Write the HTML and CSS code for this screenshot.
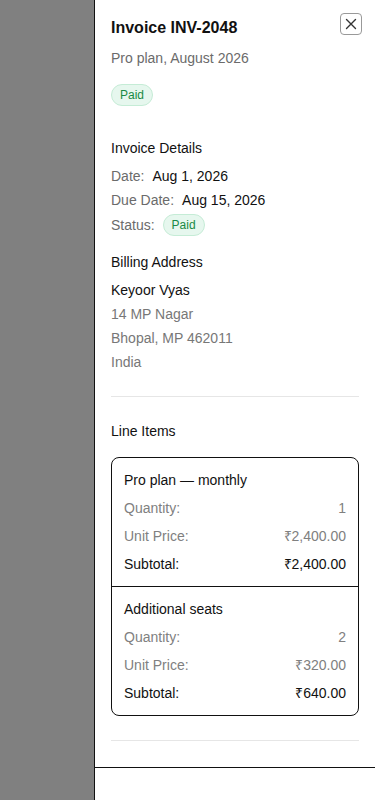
FILE: index.html
```html
<!DOCTYPE html>
<html lang="en">
<head>
<meta charset="utf-8">
<link rel="stylesheet" href="styles.css">
</head>
<body>
<div class="screen">
  <div class="overlay"></div>
  <aside class="panel">
    <div class="panel-body">
      <header class="head">
        <div class="head-text">
          <h1 class="title">Invoice INV-2048</h1>
          <p class="subtitle">Pro plan, August 2026</p>
          <span class="badge">Paid</span>
        </div>
        <button class="close" aria-label="Close">
          <svg width="12" height="12" viewBox="0 0 12 12"><path d="M1.5 1.5 L10.5 10.5 M10.5 1.5 L1.5 10.5" stroke="#333" stroke-width="1.4" stroke-linecap="round" fill="none"/></svg>
        </button>
      </header>

      <section class="section">
        <h2 class="sec-title">Invoice Details</h2>
        <div class="rows">
          <div class="kv"><span class="k">Date:</span><span class="v">Aug 1, 2026</span></div>
          <div class="kv"><span class="k">Due Date:</span><span class="v">Aug 15, 2026</span></div>
          <div class="kv"><span class="k">Status:</span><span class="badge">Paid</span></div>
        </div>
      </section>

      <section class="section addr">
        <h2 class="sec-title">Billing Address</h2>
        <div class="rows">
          <div class="name">Keyoor Vyas</div>
          <div class="muted">14 MP Nagar</div>
          <div class="muted">Bhopal, MP 462011</div>
          <div class="muted">India</div>
        </div>
      </section>

      <hr class="divider">

      <section class="section items">
        <h2 class="sec-title">Line Items</h2>
        <div class="card">
          <div class="item">
            <div class="item-name">Pro plan — monthly</div>
            <div class="line muted"><span>Quantity:</span><span>1</span></div>
            <div class="line muted"><span>Unit Price:</span><span>₹2,400.00</span></div>
            <div class="line"><span>Subtotal:</span><span>₹2,400.00</span></div>
          </div>
          <div class="item">
            <div class="item-name">Additional seats</div>
            <div class="line muted"><span>Quantity:</span><span>2</span></div>
            <div class="line muted"><span>Unit Price:</span><span>₹320.00</span></div>
            <div class="line"><span>Subtotal:</span><span>₹640.00</span></div>
          </div>
        </div>
      </section>

      <hr class="divider">
    </div>
    <footer class="foot"></footer>
  </aside>
</div>
</body>
</html>
```

FILE: styles.css
```css
* { box-sizing: border-box; }
html, body { margin: 0; padding: 0; }
body {
  font-family: "Liberation Sans", Arial, sans-serif;
  color: #111;
  background: #fff;
}
.screen {
  display: flex;
  width: 375px;
  height: 800px;
  overflow: hidden;
}
.overlay {
  width: 94px;
  flex: none;
  background: #808080;
}
.panel {
  flex: 1;
  display: flex;
  flex-direction: column;
  background: #fff;
  border-left: 1px solid #111;
}
.panel-body {
  flex: 1;
  overflow: hidden;
  padding: 16px 16px 0 16px;
}
.head {
  display: flex;
  justify-content: space-between;
  align-items: flex-start;
}
.title {
  margin: 0;
  font-size: 16px;
  line-height: 24px;
  font-weight: 700;
}
.subtitle {
  margin: 8px 0 0;
  font-size: 14px;
  line-height: 20px;
  color: #6b6b6b;
}
.head-text .badge { margin-top: 16px; }
.badge {
  display: inline-flex;
  align-items: center;
  height: 22px;
  padding: 0 8px;
  border-radius: 11px;
  background: #e6f7ee;
  border: 1px solid #c5ecd6;
  color: #198a45;
  font-size: 12px;
}
.close {
  margin: -3px -3px 0 0;
  width: 22px;
  height: 22px;
  padding: 0;
  display: flex;
  align-items: center;
  justify-content: center;
  background: #fff;
  border: 1.5px solid #999;
  border-radius: 4px;
}
.section { margin-top: 32px; }
.section.addr { margin-top: 16px; }
.sec-title {
  margin: 0;
  font-size: 14px;
  line-height: 20px;
  font-weight: 400;
  color: #111;
}
.rows {
  margin-top: 8px;
  display: flex;
  flex-direction: column;
  gap: 4px;
  font-size: 14px;
  line-height: 20px;
}
.kv {
  display: flex;
  align-items: center;
  gap: 8px;
}
.k { color: #6b6b6b; }
.v { color: #111; }
.name { color: #111; }
.muted { color: #777; }
.divider {
  margin: 24px 0 0;
  border: 0;
  border-top: 1px solid #e6e6e6;
}
.section.items { margin-top: 24px; }
.card {
  margin-top: 16px;
  border: 1px solid #111;
  border-radius: 8px;
}
.item {
  padding: 12px;
  display: flex;
  flex-direction: column;
  gap: 8px;
  font-size: 14px;
  line-height: 20px;
}
.item + .item { border-top: 1px solid #111; }
.item-name { color: #111; }
.line {
  display: flex;
  justify-content: space-between;
}
.line.muted { color: #808080; }
.foot {
  flex: none;
  height: 33px;
  border-top: 1px solid #111;
}
```
